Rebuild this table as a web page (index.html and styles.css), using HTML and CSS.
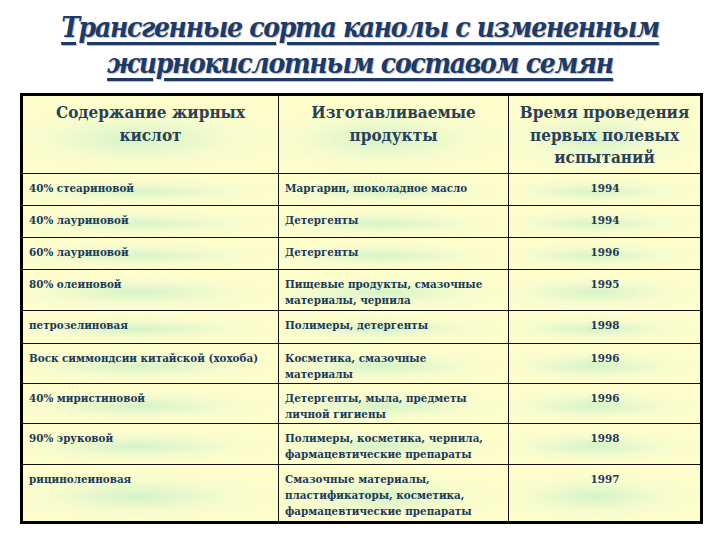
FILE: index.html
```html
<!DOCTYPE html>
<html lang="ru">
<head>
<meta charset="utf-8">
<link rel="stylesheet" href="styles.css">
</head>
<body>
<div class="page">
  <h1 class="title"><span>Трансгенные сорта канолы с измененным</span><br><span>жирнокислотным составом семян</span></h1>
  <table class="grid">
    <colgroup><col class="c1"><col class="c2"><col class="c3"></colgroup>
    <thead>
      <tr class="head">
        <th>Содержание жирных<br>кислот</th>
        <th>Изготавливаемые<br>продукты</th>
        <th>Время проведения<br>первых полевых<br>испытаний</th>
      </tr>
    </thead>
    <tbody>
      <tr class="r32"><td>40% стеариновой</td><td>Маргарин, шоколадное масло</td><td class="yr">1994</td></tr>
      <tr class="r32"><td>40% лауриновой</td><td>Детергенты</td><td class="yr">1994</td></tr>
      <tr class="r32"><td>60% лауриновой</td><td>Детергенты</td><td class="yr">1996</td></tr>
      <tr class="r41"><td>80% олеиновой</td><td>Пищевые продукты, смазочные<br>материалы, чернила</td><td class="yr">1995</td></tr>
      <tr class="r33"><td>петрозелиновая</td><td>Полимеры, детергенты</td><td class="yr">1998</td></tr>
      <tr class="r40"><td>Воск симмондсии китайской (хохоба)</td><td>Косметика, смазочные<br>материалы</td><td class="yr">1996</td></tr>
      <tr class="r40"><td>40% миристиновой</td><td>Детергенты, мыла, предметы<br>личной гигиены</td><td class="yr">1996</td></tr>
      <tr class="r41"><td>90% эруковой</td><td>Полимеры, косметика, чернила,<br>фармацевтические препараты</td><td class="yr">1998</td></tr>
      <tr class="r58"><td>рицинолеиновая</td><td>Смазочные материалы,<br>пластификаторы, косметика,<br>фармацевтические препараты</td><td class="yr">1997</td></tr>
    </tbody>
  </table>
</div>
</body>
</html>
```

FILE: styles.css
```css
html, body {
  margin: 0;
  padding: 0;
  background: #ffffff;
}
.page {
  width: 720px;
  height: 540px;
  padding-top: 10px;
  box-sizing: border-box;
}
.title {
  margin: 0;
  height: 83px;
  text-align: center;
  font-family: "DejaVu Serif Condensed", "DejaVu Serif", serif;
  font-style: italic;
  font-weight: bold;
  font-size: 28px;
  line-height: 36px;
  color: #1d3b66;
  letter-spacing: -1.3px;
  text-shadow: 1px 1px 1px rgba(60, 70, 90, 0.35);
}
.title span {
  text-decoration: underline;
  text-decoration-thickness: 3px;
  text-underline-offset: 5px;
}
.grid {
  margin-left: 20px;
  width: 680px;
  table-layout: fixed;
  border-collapse: collapse;
  border: 3px solid #000;
  font-family: "DejaVu Serif Condensed", "DejaVu Serif", serif;
  font-weight: bold;
  color: #1b3a5a;
}
.c1 { width: 257px; }
.c2 { width: 230px; }
.c3 { width: 193px; }
.grid th, .grid td {
  border: 1.5px solid #111;
  vertical-align: top;
  white-space: nowrap;
  background:
    radial-gradient(ellipse 60% 45% at 45% 55%, rgba(200, 240, 200, 0.75), rgba(230, 250, 210, 0.3) 60%, rgba(255, 255, 210, 0) 100%),
    #fefdcc;
}
.head th {
  height: 79px;
  box-sizing: border-box;
  font-size: 17px;
  line-height: 22.5px;
  padding: 5px 0 0;
  text-align: center;
  color: #2a4058;
}
.grid td {
  font-size: 11.5px;
  line-height: 16px;
  padding: 6px 5px 0 6px;
  box-sizing: border-box;
}
.grid td.yr {
  text-align: center;
}
.r32 td { height: 32px; }
.r33 td { height: 33px; }
.r40 td { height: 40px; }
.r41 td { height: 41px; }
.r58 td { height: 58px; }
```
